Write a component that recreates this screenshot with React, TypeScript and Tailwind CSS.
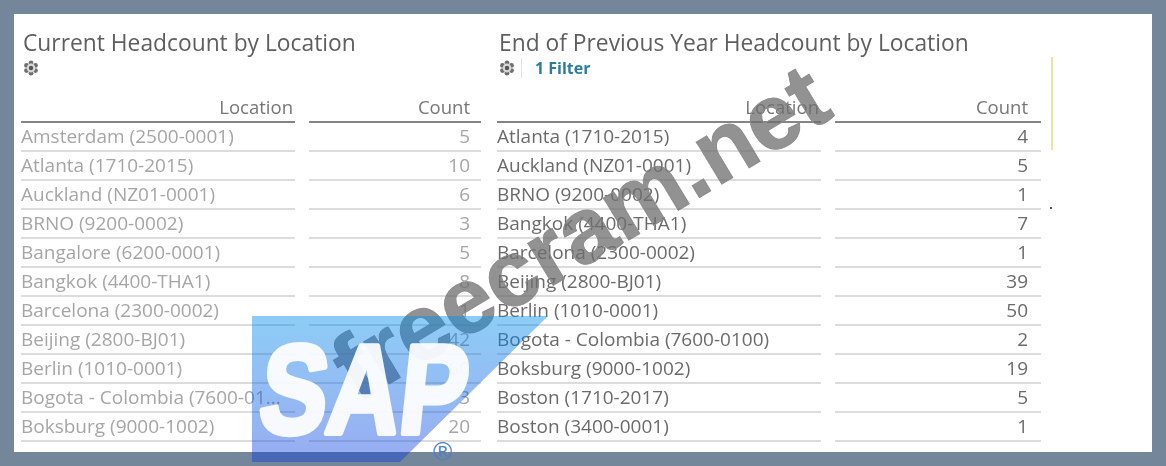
const currentRows: [string, string][] = [
  ['Amsterdam (2500-0001)', '5'],
  ['Atlanta (1710-2015)', '10'],
  ['Auckland (NZ01-0001)', '6'],
  ['BRNO (9200-0002)', '3'],
  ['Bangalore (6200-0001)', '5'],
  ['Bangkok (4400-THA1)', '8'],
  ['Barcelona (2300-0002)', '1'],
  ['Beijing (2800-BJ01)', '42'],
  ['Berlin (1010-0001)', '60'],
  ['Bogota - Colombia (7600-01...', '3'],
  ['Boksburg (9000-1002)', '20'],
];

const previousRows: [string, string][] = [
  ['Atlanta (1710-2015)', '4'],
  ['Auckland (NZ01-0001)', '5'],
  ['BRNO (9200-0002)', '1'],
  ['Bangkok (4400-THA1)', '7'],
  ['Barcelona (2300-0002)', '1'],
  ['Beijing (2800-BJ01)', '39'],
  ['Berlin (1010-0001)', '50'],
  ['Bogota - Colombia (7600-0100)', '2'],
  ['Boksburg (9000-1002)', '19'],
  ['Boston (1710-2017)', '5'],
  ['Boston (3400-0001)', '1'],
];

function ModelIcon() {
  return (
    <svg width="16" height="16" viewBox="0 0 16 16" className="shrink-0">
      <circle cx="8" cy="2.8" r="2.4" fill="#6f6f6f" />
      <circle cx="8" cy="13.2" r="2.4" fill="#6f6f6f" />
      <circle cx="3.5" cy="5.4" r="2.4" fill="#6f6f6f" />
      <circle cx="12.5" cy="5.4" r="2.4" fill="#6f6f6f" />
      <circle cx="3.5" cy="10.6" r="2.4" fill="#6f6f6f" />
      <circle cx="12.5" cy="10.6" r="2.4" fill="#6f6f6f" />
      <circle cx="8" cy="8" r="4.4" fill="#d9d9d9" />
      <circle cx="8" cy="8" r="2.2" fill="#555555" />
    </svg>
  );
}

function HeadcountTable({ rows, faded, wide }: { rows: [string, string][]; faded?: boolean; wide?: boolean }) {
  const text = faded ? 'text-[#a6a6a6]' : 'text-[#6b6b6b]';
  const countPad = wide ? 'pr-[13px]' : 'pr-[11px]';
  return (
    <div className={wide ? 'grid grid-cols-[324px_206px] gap-x-[14px]' : 'grid grid-cols-[274px_172px] gap-x-[14px]'}>
      <div className="h-[31px] border-b-2 border-[#858585] pr-[2px] text-right text-[18.5px] leading-[30px] text-[#777777]">Location</div>
      <div className={`h-[31px] border-b-2 border-[#858585] text-right text-[18.5px] leading-[30px] text-[#777777] ${countPad}`}>Count</div>
      {rows.map(([name, count]) => (
        <div key={name} className="contents">
          <div className={`h-[29px] whitespace-nowrap border-b-2 border-[#dcdcdc] text-[19px] leading-[27px] ${text}`}>{name}</div>
          <div className={`h-[29px] border-b-2 border-[#dcdcdc] text-right text-[19px] leading-[27px] ${text} ${countPad}`}>{count}</div>
        </div>
      ))}
    </div>
  );
}

export default function App() {
  return (
    <div className="relative h-[466px] w-[1166px] overflow-hidden bg-[#748699] p-[14px] font-['Open_Sans',sans-serif]">
      <div className="relative flex h-[438px] gap-[16px] overflow-hidden bg-white pl-[7px] pt-[14px] blur-[0.6px]">
        <section className="w-[460px]">
          <h2 className="whitespace-nowrap pl-[2px] text-[22.8px] leading-[30px] text-[#5f5f5f]">Current Headcount by Location</h2>
          <div className="flex h-[20px] items-center pl-[2px]">
            <ModelIcon />
          </div>
          <div className="mt-[14px]">
            <HeadcountTable rows={currentRows} faded />
          </div>
        </section>
        <section className="w-[544px]">
          <h2 className="whitespace-nowrap pl-[2px] text-[22.8px] leading-[30px] text-[#5f5f5f]">End of Previous Year Headcount by Location</h2>
          <div className="flex h-[20px] items-center pl-[2px]">
            <ModelIcon />
            <span className="ml-[6px] h-[20px] w-px bg-[#e3e3e3]" />
            <span className="ml-[13px] text-[16px] font-bold leading-[20px] text-[#2b7d9e]">1 Filter</span>
          </div>
          <div className="mt-[14px]">
            <HeadcountTable rows={previousRows} wide />
          </div>
        </section>
        <div className="absolute left-[1037px] top-[43px] h-[93px] w-[2px] bg-[#e4e6a8]" />
        <div className="absolute left-[1036px] top-[193px] h-[2px] w-[2px] bg-[#555555]" />
      </div>

      {/* Watermark sits under the translucent logo */}
      <div className="absolute left-[280px] top-[182px] w-[600px] -rotate-[31deg] whitespace-nowrap text-center font-['Liberation_Sans',sans-serif] text-[93px] font-bold leading-[100px] text-[#6e6e6e]/75 [-webkit-text-stroke:1px_#8c8c8c]">
        freecram.net
      </div>

      {/* SAP logo */}
      <svg width="296" height="146" viewBox="0 0 296 146" className="absolute left-[252px] top-[316px]">
        <defs>
          <linearGradient id="sapBlue" x1="0" y1="0" x2="0" y2="1">
            <stop offset="0" stopColor="#038fea" stopOpacity="0.45" />
            <stop offset="1" stopColor="#0a3ae0" stopOpacity="0.42" />
          </linearGradient>
        </defs>
        <polygon points="0,0 296,0 148,146 0,146" fill="url(#sapBlue)" />
        <g opacity="0.93">
          <text
            x="17"
            y="117"
            textLength="207"
            lengthAdjust="spacingAndGlyphs"
            transform="skewX(-6)"
            fontFamily="'Liberation Sans', sans-serif"
            fontWeight="700"
            fontSize="126"
            fill="#ffffff"
            stroke="#ffffff"
            strokeWidth="6"
            strokeLinejoin="round"
          >
            SAP
          </text>
        </g>
      </svg>
      <div className="absolute left-[433px] top-[436px] font-['Liberation_Sans',sans-serif] text-[26px] leading-[30px] text-[#4f7fc4]">
        ®
      </div>
    </div>
  );
}
